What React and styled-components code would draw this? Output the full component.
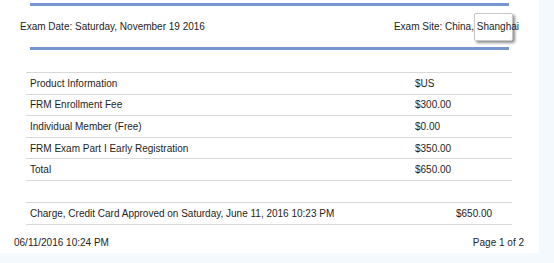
import React from "react";
import styled, { createGlobalStyle } from "styled-components";

const Global = createGlobalStyle`
  html, body { margin: 0; padding: 0; background: #f4f9fd; }
  body { font-family: "Liberation Sans", Arial, sans-serif; color: #1e1e1e; }
`;

const Page = styled.div`
  width: 539px;
  height: 253px;
  background: #fff;
  box-sizing: border-box;
  padding-top: 3px;
  font-size: 10px;
  display: flex;
  flex-direction: column;
`;

const Rule = styled.div`
  margin-left: 30px;
  width: 479px;
  height: 3px;
  background: #7090cc;
  opacity: 0.95;
`;

const InfoRow = styled.div`
  display: flex;
  justify-content: space-between;
  align-items: center;
  height: 41px;
  padding: 0 20px 0 20px;
`;

const Tip = styled.span`
  position: relative;
  z-index: 0;
  &::before {
    content: "";
    position: absolute;
    z-index: -1;
    left: -3px;
    right: 6px;
    top: -8px;
    bottom: -9px;
    background: #fff;
    border: 1px solid #c8c8c8;
    border-radius: 2px;
    box-shadow: 2px 2px 3px rgba(0, 0, 0, 0.45);
  }
`;

const Table = styled.div`
  margin: ${(p) => p.$top}px 0 0 26px;
  width: 486px;
  border-top: 1px solid #d9d9d9;
`;

const Row = styled.div`
  display: grid;
  grid-template-columns: ${(p) => p.$col}px 1fr;
  align-items: center;
  height: 20.6px;
  padding-left: 4px;
  border-bottom: 1px solid #d9d9d9;
`;

const Footer = styled.div`
  display: flex;
  justify-content: space-between;
  align-items: center;
  margin-top: 12px;
  padding: 0 15px 0 14px;
`;

const items = [
  ["Product Information", "$US"],
  ["FRM Enrollment Fee", "$300.00"],
  ["Individual Member (Free)", "$0.00"],
  ["FRM Exam Part I Early Registration", "$350.00"],
  ["Total", "$650.00"],
];

export default function App() {
  return (
    <>
      <Global />
      <Page>
        <Rule />
        <InfoRow>
          <span>Exam Date: Saturday, November 19 2016</span>
          <span>
            Exam Site: China, <Tip>Shanghai</Tip>
          </span>
        </InfoRow>
        <Rule />
        <Table $top={22}>
          {items.map(([a, b]) => (
            <Row key={a} $col={385}>
              <span>{a}</span>
              <span>{b}</span>
            </Row>
          ))}
        </Table>
        <Table $top={21}>
          <Row $col={426}>
            <span>Charge, Credit Card Approved on Saturday, June 11, 2016 10:23 PM</span>
            <span>$650.00</span>
          </Row>
        </Table>
        <Footer>
          <span>06/11/2016 10:24 PM</span>
          <span>Page 1 of 2</span>
        </Footer>
      </Page>
    </>
  );
}
